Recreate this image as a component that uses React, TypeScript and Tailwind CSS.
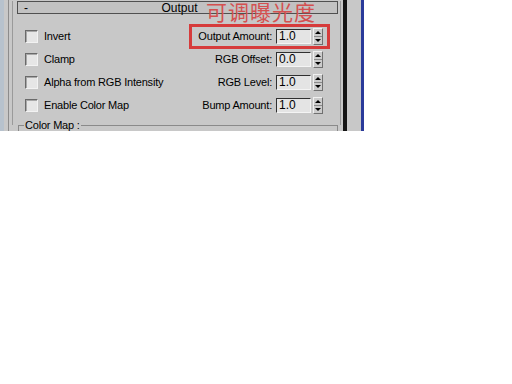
import React from 'react';

const LEFT = ['Invert', 'Clamp', 'Alpha from RGB Intensity', 'Enable Color Map'];
const RIGHT = [
  { label: 'Output Amount:', value: '1.0' },
  { label: 'RGB Offset:', value: '0.0' },
  { label: 'RGB Level:', value: '1.0' },
  { label: 'Bump Amount:', value: '1.0' },
];

function Checkbox() {
  return (
    <div className="w-[13px] h-[13px] border-t border-l border-[#6a6a6a] border-b border-r border-b-[#f2f2f2] border-r-[#f2f2f2] bg-[#e6e6e6] shadow-[inset_1px_1px_0_#a8a8a8]" />
  );
}

function Spinner() {
  return (
    <div className="flex flex-col w-[10px] h-[17px] border border-t-[#f0f0f0] border-l-[#f0f0f0] border-b-[#707070] border-r-[#707070] bg-[#cccccc]">
      <div className="flex-1 flex items-center justify-center border-b border-[#8a8a8a]">
        <div className="w-0 h-0 border-l-[3px] border-r-[3px] border-b-[3px] border-l-transparent border-r-transparent border-b-black" />
      </div>
      <div className="flex-1 flex items-center justify-center">
        <div className="w-0 h-0 border-l-[3px] border-r-[3px] border-t-[3px] border-l-transparent border-r-transparent border-t-black" />
      </div>
    </div>
  );
}

function NumField({ value }: { value: string }) {
  return (
    <div className="flex items-center gap-[2px]">
      <div className="w-[35px] h-[15px] border border-t-[#303030] border-l-[#303030] border-b-[#f4f4f4] border-r-[#f4f4f4] bg-[#e4e4e4] pl-[2px] text-[12px] leading-[13px]">
        {value}
      </div>
      <Spinner />
    </div>
  );
}

export default function App() {
  return (
    <div
      className="relative w-[512px] h-[384px] bg-white text-black"
      style={{ fontFamily: '"Liberation Sans", Arial, sans-serif' }}
    >
      <div className="flex w-[364px] h-[131px] overflow-hidden bg-[#c8c8c8]">
        <div className="w-[4px] bg-[#b7c2cd]" />
        <div className="w-[5px] border-r border-[#8c8c8c]" />
        <div className="w-[3px]" />

        {/* rollout */}
        <div className="flex-1 pt-[7px]">
          <div className="h-full border-l border-r border-l-[#9a9a9a] border-r-[#9a9a9a]">
            <div className="-mt-[6px] ml-[4px] mr-[2px] h-[13px] flex items-center justify-between px-[6px] border border-[#505050] bg-[#c2c2c2] text-[12px] leading-[12px]">
              <span>-</span>
              <span className="pl-[8px]">Output</span>
              <span className="w-[8px]" />
            </div>

            <div className="flex flex-col pt-[11px] pl-[12px] pr-[17px] text-[11px]">
              {LEFT.map((l, i) => (
                <div key={l} className="h-[23px] flex items-center justify-between">
                  <div className="flex items-center gap-[6px]">
                    <Checkbox />
                    <span className="tracking-[-0.2px]">{l}</span>
                  </div>
                  <div className="flex items-center gap-[4px]">
                    <span className="tracking-[-0.2px]">{RIGHT[i].label}</span>
                    <NumField value={RIGHT[i].value} />
                  </div>
                </div>
              ))}
            </div>

            <fieldset className="mt-[3px] ml-[5px] mr-[2px] h-[20px] border-t border-l border-r border-[#8a8a8a]">
              <legend className="ml-[5px] px-[1px] text-[11px] leading-[11px] tracking-[-0.2px]">Color Map :</legend>
            </fieldset>
          </div>
        </div>

        <div className="w-[2px]" />
        <div className="w-[4px] bg-[#141414]" />
        <div className="w-[14px]" />
        <div className="w-[3px] bg-[#2a3a9a]" />
      </div>

      {/* annotation overlay */}
      <div className="absolute left-[189px] top-[24px] w-[141px] h-[25px] border-[3px] border-[#d63b3b]" />
      <div
        className="absolute left-[206px] top-0 text-[21px] leading-[22px] text-[#d45050] tracking-[1px]"
        style={{ fontFamily: '"Noto Sans CJK SC", sans-serif' }}
      >
        可调曝光度
      </div>
    </div>
  );
}
